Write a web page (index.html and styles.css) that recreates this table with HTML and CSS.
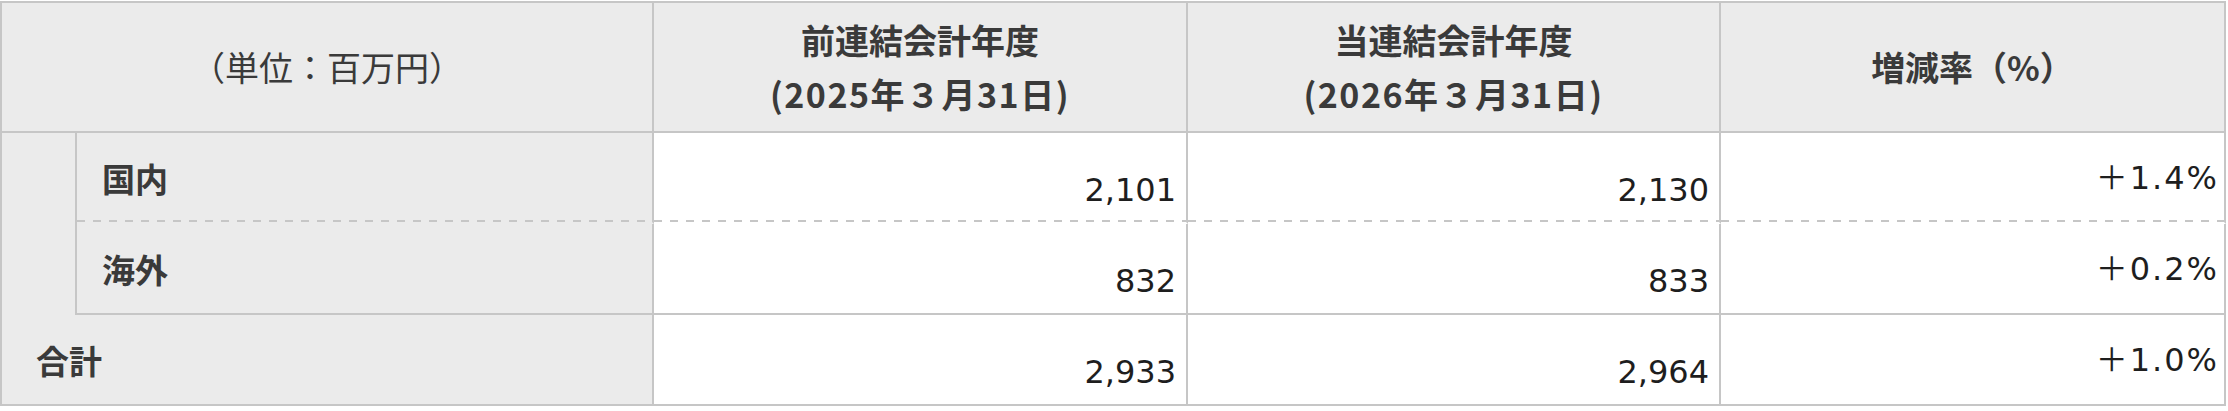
FILE: index.html
```html
<!DOCTYPE html>
<html lang="ja">
<head>
<meta charset="utf-8">
<title>売上高</title>
<link rel="stylesheet" href="styles.css">
</head>
<body>
<table class="sales">
  <colgroup>
    <col class="c-sub">
    <col class="c-label">
    <col class="c-num">
    <col class="c-num2">
    <col class="c-rate">
  </colgroup>
  <thead>
    <tr class="head-row">
      <th class="unit" colspan="2">（単位：百万円）</th>
      <th class="period">前連結会計年度<br><span class="date">(2025年３月31日)</span></th>
      <th class="period">当連結会計年度<br><span class="date">(2026年３月31日)</span></th>
      <th class="period">増減率（%）</th>
    </tr>
  </thead>
  <tbody>
    <tr class="row dashed">
      <th class="indent" rowspan="2"></th>
      <th class="label">国内</th>
      <td class="num">2,101</td>
      <td class="num">2,130</td>
      <td class="rate">＋1.4%</td>
    </tr>
    <tr class="row">
      <th class="label">海外</th>
      <td class="num">832</td>
      <td class="num">833</td>
      <td class="rate">＋0.2%</td>
    </tr>
    <tr class="row">
      <th class="label total" colspan="2">合計</th>
      <td class="num">2,933</td>
      <td class="num">2,964</td>
      <td class="rate">＋1.0%</td>
    </tr>
  </tbody>
</table>
</body>
</html>
```

FILE: styles.css
```css
html, body {
  margin: 0;
  padding: 0;
  background: #ffffff;
}

.sales {
  border-collapse: separate;
  border-spacing: 0;
  table-layout: fixed;
  width: 2226px;
  margin-top: 1px;
  border-top: 2px solid #c6c6c6;
  border-left: 2px solid #c6c6c6;
  font-family: "Noto Sans CJK JP", "DejaVu Sans", sans-serif;
  color: #3a3a3a;
}

.c-sub { width: 75px; }
.c-label { width: 577px; }
.c-num { width: 534px; }
.c-num2 { width: 533px; }
.c-rate { width: 505px; }

.sales th,
.sales td {
  box-sizing: border-box;
  border-right: 2px solid #c6c6c6;
  border-bottom: 2px solid #c6c6c6;
  padding: 0;
}

.sales th {
  background-color: #ebebeb;
}

.head-row th {
  height: 130px;
  text-align: center;
  vertical-align: middle;
  font-size: 34px;
  line-height: 54px;
}

.head-row .unit {
  font-weight: 400;
}

.head-row .period {
  font-weight: 700;
}

.date {
  letter-spacing: 1.5px;
}

.row th,
.row td {
  height: 91px;
}

.sales .indent {
  border-bottom: none;
}

.sales .label {
  text-align: left;
  vertical-align: middle;
  font-size: 33px;
  font-weight: 700;
  padding-left: 25px;
}

.sales .label.total {
  padding-left: 34px;
}

.sales .dashed .label,
.sales .dashed td {
  border-bottom: 2px solid transparent;
  background-image: linear-gradient(to right, #c6c6c6 50%, transparent 50%);
  background-size: 16px 2px;
  background-position: left bottom;
  background-repeat: repeat-x;
}

.sales .num {
  text-align: right;
  vertical-align: top;
  font-family: "DejaVu Sans", "Noto Sans CJK JP", sans-serif;
  font-size: 32px;
  line-height: 36px;
  color: #1e1e1e;
  padding: 39px 10px 0 0;
}

.sales .rate {
  text-align: right;
  vertical-align: top;
  font-family: "DejaVu Sans", "Noto Sans CJK JP", sans-serif;
  font-size: 32px;
  line-height: 36px;
  letter-spacing: 2px;
  color: #1e1e1e;
  padding: 27px 5px 0 0;
}
```
